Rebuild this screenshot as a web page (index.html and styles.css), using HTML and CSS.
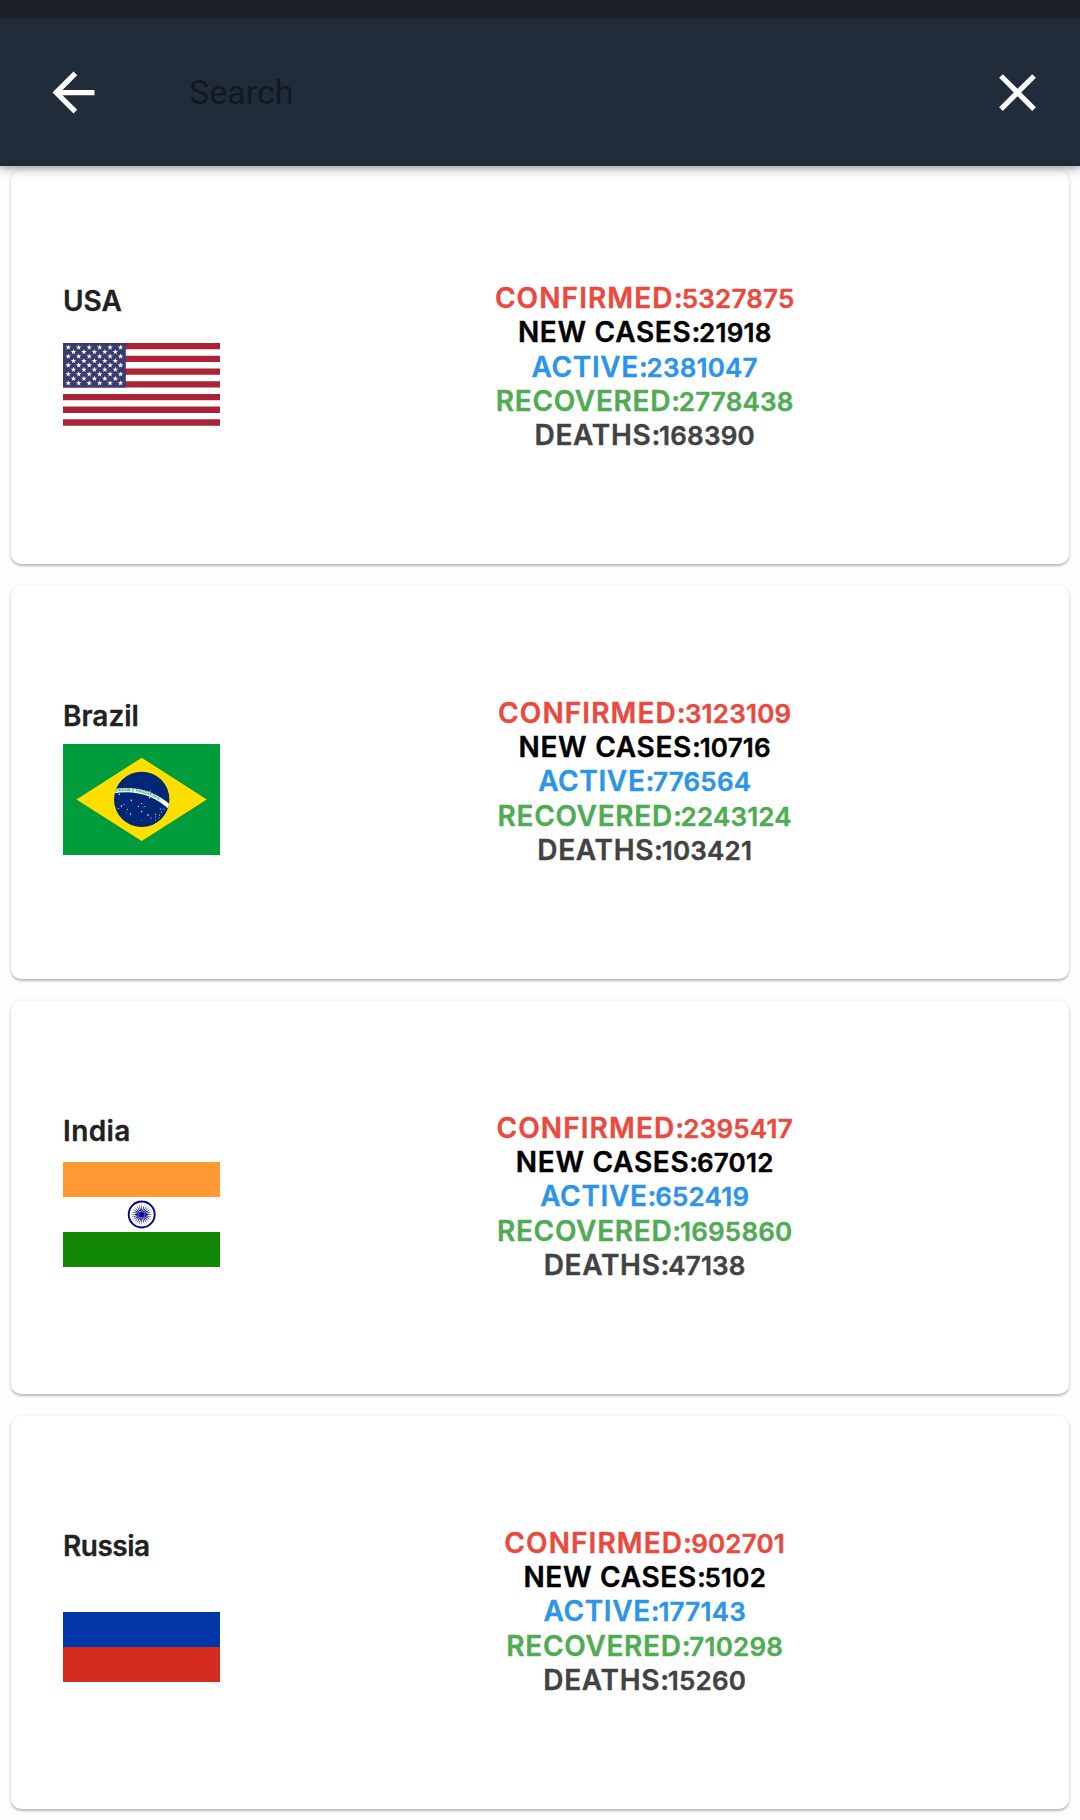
FILE: index.html
```html
<!DOCTYPE html>
<html lang="en">
<head>
<meta charset="utf-8">
<title>Search</title>
<link rel="stylesheet" href="styles.css">
</head>
<body>
<header class="app-bar">
  <svg class="icon" viewBox="0 0 24 24"><path d="M20 11H7.83l5.59-5.59L12 4l-8 8 8 8 1.41-1.41L7.83 13H20v-2z"/></svg>
  <div class="search-hint">Search</div>
  <svg class="icon" viewBox="0 0 24 24"><path d="M19 6.41L17.59 5 12 10.59 6.41 5 5 6.41 10.59 12 5 17.59 6.41 19 12 13.41 17.59 19 19 17.59 13.41 12z"/></svg>
</header>
<main class="list">
  <section class="card">
    <div class="country">
      <h2 class="name">USA</h2>
      <div class="flag">
        <svg width="157" height="82.7" viewBox="0 0 247 130" preserveAspectRatio="none">
          <defs>
            <path id="star" d="M0-4.6 1.1-1.4 4.4-1.4 1.7.6 2.7 3.7 0 1.8-2.7 3.7-1.7.6-4.4-1.4-1.1-1.4z"/>
            <g id="row6"><use href="#star" x="8.23"/><use href="#star" x="24.7"/><use href="#star" x="41.17"/><use href="#star" x="57.63"/><use href="#star" x="74.1"/><use href="#star" x="90.57"/></g>
            <g id="row5"><use href="#star" x="16.47"/><use href="#star" x="32.93"/><use href="#star" x="49.4"/><use href="#star" x="65.87"/><use href="#star" x="82.33"/></g>
          </defs>
          <path fill="#fff" d="M0 0h247v130H0z"/>
          <path stroke="#ab2337" stroke-width="10" d="M0 5h247M0 25h247M0 45h247M0 65h247M0 85h247M0 105h247M0 125h247"/>
          <path fill="#3c3b6e" d="M0 0h98.8v70H0z"/>
          <g fill="#fff">
            <use href="#row6" y="7"/><use href="#row5" y="14"/><use href="#row6" y="21"/><use href="#row5" y="28"/><use href="#row6" y="35"/><use href="#row5" y="42"/><use href="#row6" y="49"/><use href="#row5" y="56"/><use href="#row6" y="63"/>
          </g>
        </svg>
      </div>
    </div>
    <div class="stats">
      <p class="confirmed">CONFIRMED:<span>5327875</span></p>
      <p class="new-cases">NEW CASES:<span>21918</span></p>
      <p class="active">ACTIVE:<span>2381047</span></p>
      <p class="recovered">RECOVERED:<span>2778438</span></p>
      <p class="deaths">DEATHS:<span>168390</span></p>
    </div>
  </section>
  <section class="card">
    <div class="country">
      <h2 class="name">Brazil</h2>
      <div class="flag">
        <svg width="157" height="111" viewBox="0 0 157 111">
          <defs>
            <clipPath id="globe"><circle cx="78.7" cy="55.4" r="27.7"/></clipPath>
            <path id="motto" d="M49.5 48.6A63.4 63.4 0 0 1 109 66.5"/>
          </defs>
          <path fill="#009b3a" d="M0 0h157v111H0z"/>
          <path fill="#fedf00" d="M13.4 55.4 78.7 13.8l65.1 41.6L78.7 97z"/>
          <circle cx="78.7" cy="55.4" r="27.7" fill="#002776"/>
          <g clip-path="url(#globe)">
            <circle cx="63" cy="110.8" r="64.7" fill="none" stroke="#f4fbf7" stroke-width="4.4"/>
            <text class="motto"><textPath href="#motto" startOffset="3">ORDEM E PROGRESSO</textPath></text>
          </g>
          <g fill="#fff">
            <circle cx="56.3" cy="50.3" r=".7"/><circle cx="68.3" cy="56.3" r=".7"/><circle cx="58.5" cy="62" r=".7"/><circle cx="61" cy="60.2" r=".5"/><circle cx="64.5" cy="65.5" r=".6"/><circle cx="67.5" cy="70" r=".7"/><circle cx="55.3" cy="64.5" r=".5"/><circle cx="63.5" cy="69" r=".4"/>
            <circle cx="78.7" cy="59.5" r=".6"/><circle cx="75.5" cy="62.3" r=".6"/><circle cx="82" cy="62.5" r=".6"/><circle cx="78.7" cy="67.5" r=".7"/><circle cx="80" cy="63.8" r=".4"/><circle cx="86.5" cy="53.8" r=".7"/><circle cx="87" cy="47" r=".6"/>
            <circle cx="85" cy="71" r=".8"/><circle cx="88" cy="74" r=".6"/><circle cx="92.5" cy="70.5" r=".6"/><circle cx="92.5" cy="73" r=".5"/><circle cx="92.5" cy="76" r=".5"/><circle cx="97.7" cy="65" r=".6"/><circle cx="98.5" cy="68" r=".6"/><circle cx="96.5" cy="71" r=".6"/><circle cx="101" cy="65" r=".6"/><circle cx="96" cy="74" r=".5"/><circle cx="78.7" cy="76.5" r=".4"/>
          </g>
        </svg>
      </div>
    </div>
    <div class="stats">
      <p class="confirmed">CONFIRMED:<span>3123109</span></p>
      <p class="new-cases">NEW CASES:<span>10716</span></p>
      <p class="active">ACTIVE:<span>776564</span></p>
      <p class="recovered">RECOVERED:<span>2243124</span></p>
      <p class="deaths">DEATHS:<span>103421</span></p>
    </div>
  </section>
  <section class="card">
    <div class="country">
      <h2 class="name india">India</h2>
      <div class="flag">
        <svg width="157" height="105" viewBox="0 0 157 105">
          <defs>
            <path id="spoke" d="M0-11 .45-5 0 0-.45-5zM0 11 .45 5 0 0-.45 5z"/>
            <g id="spokes"><use href="#spoke"/><use href="#spoke" transform="rotate(15)"/><use href="#spoke" transform="rotate(30)"/><use href="#spoke" transform="rotate(45)"/><use href="#spoke" transform="rotate(60)"/><use href="#spoke" transform="rotate(75)"/></g>
          </defs>
          <path fill="#fff" d="M0 0h157v105H0z"/>
          <path fill="#ff9933" d="M0 0h157v35H0z"/>
          <path fill="#128807" d="M0 70h157v35H0z"/>
          <g transform="translate(78.7 52.5)" fill="#000088">
            <circle r="13" fill="none" stroke="#000088" stroke-width="1.9"/>
            <use href="#spokes"/>
            <use href="#spokes" transform="rotate(90)"/>
            <circle r="2.6"/>
          </g>
        </svg>
      </div>
    </div>
    <div class="stats">
      <p class="confirmed">CONFIRMED:<span>2395417</span></p>
      <p class="new-cases">NEW CASES:<span>67012</span></p>
      <p class="active">ACTIVE:<span>652419</span></p>
      <p class="recovered">RECOVERED:<span>1695860</span></p>
      <p class="deaths">DEATHS:<span>47138</span></p>
    </div>
  </section>
  <section class="card">
    <div class="country">
      <h2 class="name russia">Russia</h2>
      <div class="flag">
        <svg width="157" height="105" viewBox="0 0 157 105">
          <path fill="#fff" d="M0 0h157v35H0z"/>
          <path fill="#0036a7" d="M0 35h157v35H0z"/>
          <path fill="#d52b1e" d="M0 70h157v35H0z"/>
        </svg>
      </div>
    </div>
    <div class="stats">
      <p class="confirmed">CONFIRMED:<span>902701</span></p>
      <p class="new-cases">NEW CASES:<span>5102</span></p>
      <p class="active">ACTIVE:<span>177143</span></p>
      <p class="recovered">RECOVERED:<span>710298</span></p>
      <p class="deaths">DEATHS:<span>15260</span></p>
    </div>
  </section>
</main>
</body>
</html>
```
FILE: styles.css
```css
* { box-sizing: border-box; }

body {
  margin: 0;
  height: 1820px;
  overflow: hidden;
  background: #fefefe;
  font-family: Inter, "Liberation Sans", sans-serif;
}

.app-bar {
  position: relative;
  display: flex;
  align-items: center;
  height: 166px;
  padding: 0 31.4px 0 42px;
  border-top: 19px solid #1b202b;
  background: #212c3b;
  box-shadow: 0 4px 10px rgba(0, 0, 0, .24), 0 2px 4px rgba(0, 0, 0, .14);
}

.icon {
  width: 63px;
  height: 63px;
  fill: #fff;
}

.icon:first-child { margin-left: -.5px; }

.search-hint {
  flex: 1;
  padding: 0 0 2px 84.5px;
  font: 400 34px/40px Roboto, sans-serif;
  color: #111923;
}

.list {
  display: flex;
  flex-direction: column;
  gap: 22px;
  padding: 5px 10.6px;
}

.card {
  display: flex;
  flex: none;
  height: 392.9px;
  border-radius: 10px;
  background: #fff;
  box-shadow: 0 2px 2px rgba(0, 0, 0, .2), 0 1px 5px rgba(0, 0, 0, .13);
}

.country {
  width: 210px;
  padding: 110px 0 0 52.4px;
}

.name {
  margin: 0;
  font-size: 28px;
  font-weight: 600;
  line-height: 40px;
  color: #212121;
  -webkit-text-stroke: .3px;
}

.india { letter-spacing: .4px; }
.russia { letter-spacing: -.5px; }

.flag {
  display: flex;
  align-items: center;
  height: 127px;
}

.flag svg { display: block; flex: none; }

.motto {
  font: 700 3.6px Inter, sans-serif;
  letter-spacing: .35px;
  fill: #009b3a;
}

.stats {
  flex: 1;
  padding: 110px .6px 0 0;
  text-align: center;
}

.stats p {
  margin: 0;
  font-size: 28px;
  font-weight: 600;
  line-height: 34.3px;
  -webkit-text-stroke: .4px;
}

.stats span {
  margin-left: -2px;
  font-size: 26px;
  line-height: 0;
  letter-spacing: .2px;
}

.confirmed { color: #e94a3f; letter-spacing: 1.1px; }
.new-cases { color: #000; letter-spacing: .7px; }
.active { color: #2c95e8; letter-spacing: .65px; }
.recovered { color: #50ab54; letter-spacing: .7px; }
.deaths { color: #424243; letter-spacing: .7px; }
```
